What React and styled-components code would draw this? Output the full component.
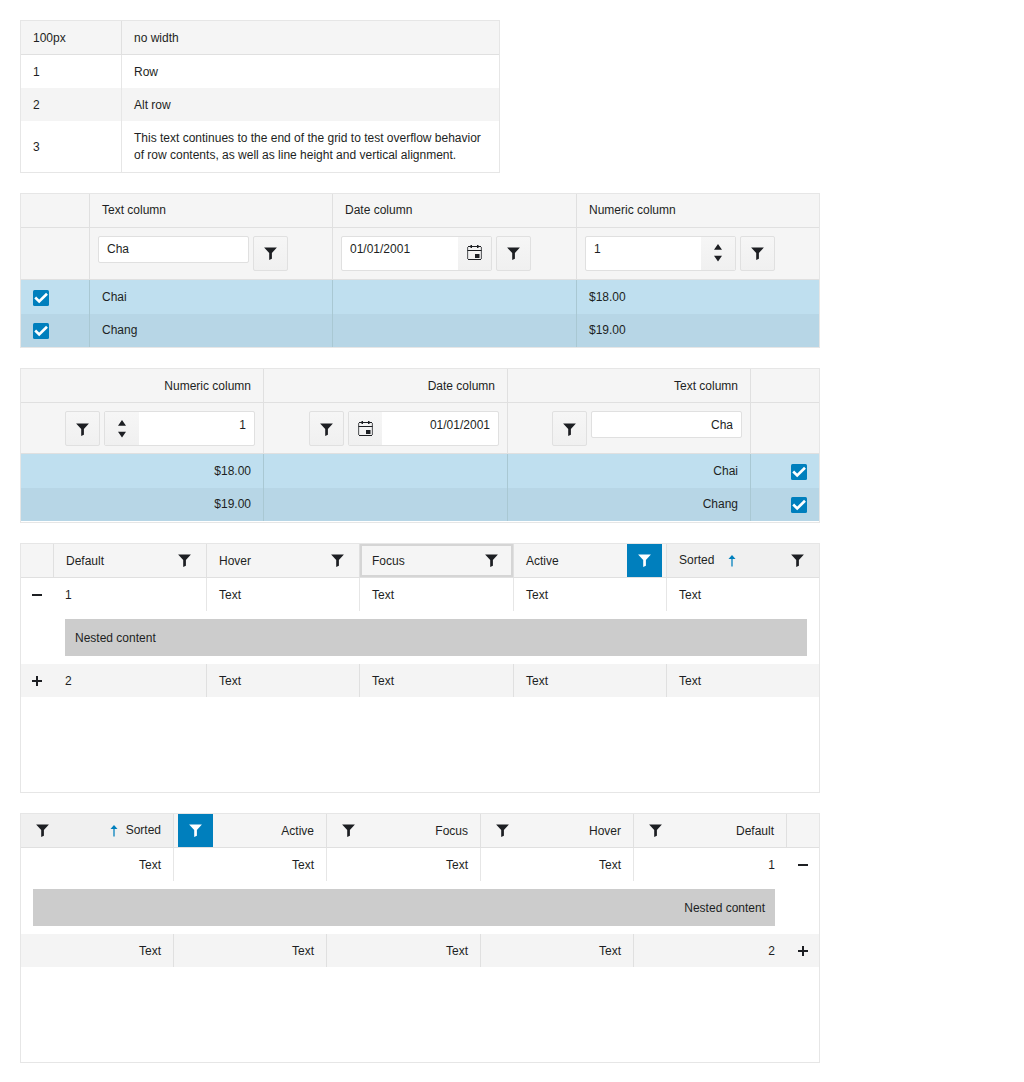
import React from "react";
import styled, { createGlobalStyle, css } from "styled-components";

const GlobalStyle = createGlobalStyle`
  * { box-sizing: border-box; }
  body {
    margin: 0;
    background: #fff;
    color: #1d1f23;
    font: 12px/17px "Liberation Sans", Arial, sans-serif;
  }
`;

const Page = styled.main`
  display: flex;
  flex-direction: column;
  align-items: flex-start;
  gap: 20px;
  padding: 20px;
`;

const Grid = styled.section`
  width: ${(p) => p.$width || 800}px;
  height: ${(p) => (p.$height ? `${p.$height}px` : "auto")};
  border: 1px solid #e6e6e6;
  background: #fff;
`;

const Row = styled.div`
  display: grid;
  grid-template-columns: ${(p) => p.$columns};
  height: ${(p) => p.$height || 33}px;
  background: ${(p) => p.$background || "#fff"};
`;

const HeaderRow = styled(Row)`
  height: ${(p) => p.$height || 34}px;
  background: #f5f5f5;
  border-bottom: 1px solid #e0e0e0;
`;

const Cell = styled.div`
  display: flex;
  align-items: center;
  min-width: 0;
  padding-inline: 12px;
  padding-top: 1px;
  padding-bottom: ${(p) => p.$lift || 0}px;
  border-inline-start: ${(p) => (p.$plain ? "none" : `1px solid ${p.$line || "#e6e6e6"}`)};
`;

const HeaderCell = styled(Cell)`
  padding-inline-end: 4px;
  padding-top: 0;
  border-inline-start-color: #e0e0e0;
  ${(p) => p.$sorted && css`background: #f0f0f0;`}
  ${(p) => p.$focused && css`box-shadow: inset 0 0 0 2px #d5d5d5;`}
`;

const Title = styled.span`
  padding-top: 1px;
  padding-bottom: ${(p) => p.$lift || 0}px;
`;

const HeaderFilter = styled.span`
  display: flex;
  align-items: center;
  justify-content: center;
  width: 35px;
  height: 33px;
  margin-inline-start: auto;
  color: ${(p) => (p.$active ? "#fff" : "inherit")};
  background: ${(p) => (p.$active ? "#007fbd" : "transparent")};
`;

const SortMark = styled.span`
  display: flex;
  color: #007fbd;
  margin-inline-start: ${(p) => p.$gap}px;
`;

const FilterCell = styled.div`
  display: flex;
  align-items: flex-start;
  gap: 4px;
  padding: 8px;
  border-inline-start: ${(p) => (p.$plain ? "none" : "1px solid #e0e0e0")};
`;

const Field = styled.div`
  display: flex;
  width: 151px;
  height: ${(p) => (p.$compact ? 27 : 35)}px;
  overflow: hidden;
  border: 1px solid #e0e0e0;
  border-radius: 2px;
  background: #fff;
`;

const Input = styled.input`
  flex: 1;
  min-width: 0;
  height: 17px;
  margin-top: ${(p) => p.$top}px;
  padding: 0 8px;
  border: 0;
  outline: 0;
  background: transparent;
  color: inherit;
  font: inherit;
`;

const FieldButton = styled.span`
  display: flex;
  align-items: center;
  justify-content: center;
  width: ${(p) => p.$width}px;
  padding-top: ${(p) => p.$drop}px;
  padding-bottom: ${(p) => p.$lift}px;
  background: linear-gradient(#f6f6f6, #f0f0f0);
`;

const FilterButton = styled.button`
  display: flex;
  align-items: center;
  justify-content: center;
  width: 35px;
  height: 35px;
  padding: ${(p) => p.$drop}px 0 0;
  border: 1px solid #e0e0e0;
  border-radius: 2px;
  color: inherit;
  background: linear-gradient(#f6f6f6, #f0f0f0);
`;

const Check = styled.span`
  display: flex;
  width: 16px;
  height: 16px;
  border-radius: 1.5px;
  background: #007fbd;
`;

const Toggle = styled.div`
  display: flex;
  align-items: center;
  justify-content: center;
`;

const Detail = styled.div`
  height: 53px;
  padding-block: 8px;
  padding-inline: 44px 12px;
`;

const Nested = styled.div`
  padding: 11px 10px 9px;
  background: #ccc;
`;

const Svg = styled.svg.attrs({ width: 16, height: 16, viewBox: "0 0 16 16", fill: "currentColor" })`
  display: block;
  flex: none;
`;

const FilterIcon = () => (
  <Svg><path d="M1.100 1.500h12.800L8.900 7v5.800L6.200 14V7z" /></Svg>
);
const CalendarIcon = () => (
  <svg width="15" height="15" viewBox="0 0 15 15" fill="currentColor">
    <path d="M1 1.500h13M.500 5.500h14M1 14.500h13" stroke="currentColor" />
    <path d="M.600 2v12M14.400 2v12" stroke="currentColor" strokeWidth="1.100" opacity=".7" />
    <path d="M3.500 0h1.500v3H3.500zM10 0h1.500v3H10zM8 9h4.500v4H8z" />
  </svg>
);
const SpinIcon = () => (
  <svg width="8" height="18" viewBox="0 0 8 18" fill="currentColor">
    <path d="M4 0l4 5.800H0zM4 17.600l4-5.800H0z" />
  </svg>
);
const SortIcon = () => (
  <Svg>
    <path d="M8 2l3.500 4h-7z" />
    <path d="M7.200 5.500h1.600v8H7.200z" opacity=".8" />
  </Svg>
);
const CheckIcon = () => (
  <Svg><path d="M2.200 7.500l4 4 7.800-7.700" fill="none" stroke="#fff" strokeWidth="2.600" /></Svg>
);
const MinusIcon = () => <Svg><path d="M3 7h10v2H3z" /></Svg>;
const PlusIcon = () => <Svg><path d="M3 7h4V3h2v4h4v2H9v4H7V9H3z" /></Svg>;

const SIMPLE = "100px 1fr";
const FILTERS = "68px 243px 244px 243px";
const STATES = "32px 153px 153px 154px 153px 153px";

function SimpleGrid() {
  return (
    <Grid $width={480}>
      <HeaderRow $columns={SIMPLE}>
        <Cell $plain>100px</Cell>
        <Cell $line="#e0e0e0">no width</Cell>
      </HeaderRow>
      <Row $columns={SIMPLE}><Cell $plain>1</Cell><Cell>Row</Cell></Row>
      <Row $columns={SIMPLE} $background="#f4f4f4"><Cell $plain>2</Cell><Cell>Alt row</Cell></Row>
      <Row $columns={SIMPLE} $height={51}>
        <Cell $plain>3</Cell>
        <Cell $lift={1}>This text continues to the end of the grid to test overflow behavior of row contents, as well as line height and vertical alignment.</Cell>
      </Row>
    </Grid>
  );
}

function FilterGrid({ dir }) {
  const rtl = dir === "rtl";
  const top = rtl ? 5 : 4;
  const drop = rtl ? 2 : 0;
  const lift = rtl ? 0 : 2;
  return (
    <Grid dir={dir} $height={155}>
      <HeaderRow $columns={FILTERS}>
        <HeaderCell $plain />
        {["Text column", "Date column", "Numeric column"].map((name) => (
          <Cell key={name} $line="#e0e0e0" $lift={lift}>{name}</Cell>
        ))}
      </HeaderRow>
      <HeaderRow $columns={FILTERS} $height={rtl ? 51 : 52}>
        <FilterCell $plain />
        <FilterCell>
          <Field $compact><Input $top={top} defaultValue="Cha" /></Field>
          <FilterButton $drop={drop}><FilterIcon /></FilterButton>
        </FilterCell>
        <FilterCell>
          <Field>
            <Input $top={top} defaultValue="01/01/2001" />
            <FieldButton $width={33} $drop={drop} $lift={2}><CalendarIcon /></FieldButton>
          </Field>
          <FilterButton $drop={drop}><FilterIcon /></FilterButton>
        </FilterCell>
        <FilterCell>
          <Field>
            <Input $top={top} defaultValue="1" />
            <FieldButton $width={34} $drop={drop} $lift={1}><SpinIcon /></FieldButton>
          </Field>
          <FilterButton $drop={drop}><FilterIcon /></FilterButton>
        </FilterCell>
      </HeaderRow>
      {[["Chai", "$18.00"], ["Chang", "$19.00"]].map(([name, price], i) => (
        <Row key={name} $columns={FILTERS} $height={i ? 33 : 34} $background={i ? "#b7d6e6" : "#bfdfef"}>
          <Cell $plain $lift={i ? 1 : 0}><Check><CheckIcon /></Check></Cell>
          <Cell $line="#a9c8d3" $lift={i ? 2 : 0}>{name}</Cell>
          <Cell $line="#a9c8d3" />
          <Cell $line="#a9c8d3" $lift={i ? 2 : 0}>{price}</Cell>
        </Row>
      ))}
    </Grid>
  );
}

function StateRow({ index, open }) {
  return (
    <Row $columns={STATES} $background={open ? "#fff" : "#f4f4f4"}>
      <Toggle>{open ? <MinusIcon /> : <PlusIcon />}</Toggle>
      <Cell $plain>{index}</Cell>
      {[0, 1, 2, 3].map((i) => <Cell key={i} $line={open ? "#e6e6e6" : "#e0e0e0"}>Text</Cell>)}
    </Row>
  );
}

function StateGrid({ dir }) {
  return (
    <Grid dir={dir} $height={250}>
      <HeaderRow $columns={STATES}>
        <HeaderCell $plain />
        {["Default", "Hover", "Focus", "Active", "Sorted"].map((name) => {
          const sorted = name === "Sorted";
          return (
            <HeaderCell key={name} $sorted={sorted} $focused={name === "Focus" && dir === "ltr"}>
              <Title $lift={sorted ? 2 : 0}>{name}</Title>
              {sorted && <SortMark $gap={dir === "rtl" ? 4 : 10}><SortIcon /></SortMark>}
              <HeaderFilter $active={name === "Active"}><FilterIcon /></HeaderFilter>
            </HeaderCell>
          );
        })}
      </HeaderRow>
      <StateRow index={1} open />
      <Detail><Nested>Nested content</Nested></Detail>
      <StateRow index={2} />
    </Grid>
  );
}

export default function App() {
  return (
    <>
      <GlobalStyle />
      <Page>
        <SimpleGrid />
        <FilterGrid dir="ltr" />
        <FilterGrid dir="rtl" />
        <StateGrid dir="ltr" />
        <StateGrid dir="rtl" />
      </Page>
    </>
  );
}
